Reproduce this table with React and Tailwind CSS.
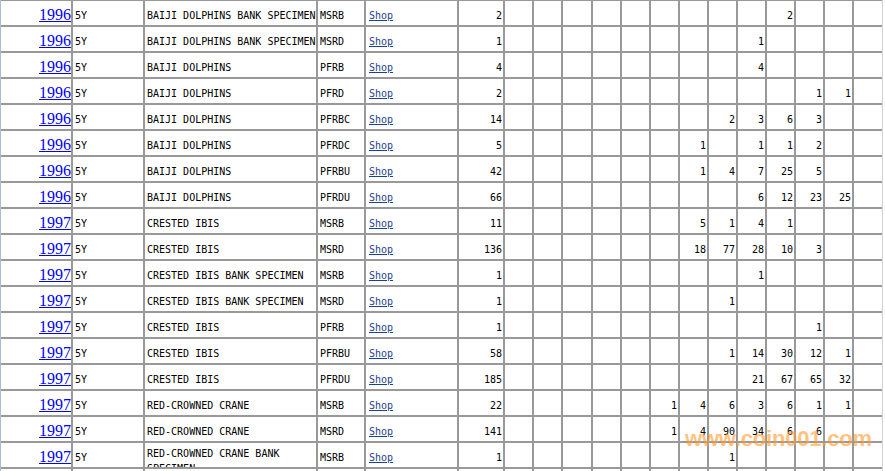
const COLS = "grid grid-cols-[70px_70px_171px_46px_91px_44px_27px_27px_28px_27px_27px_27px_27px_27px_27px_27px_27px_27px_28px] gap-x-[2px]";

const ROWS = [
  { year: "1996", name: "BAIJI DOLPHINS BANK SPECIMEN", code: "MSRB", total: 2, g: { 10: 2 } },
  { year: "1996", name: "BAIJI DOLPHINS BANK SPECIMEN", code: "MSRD", total: 1, g: { 9: 1 } },
  { year: "1996", name: "BAIJI DOLPHINS", code: "PFRB", total: 4, g: { 9: 4 } },
  { year: "1996", name: "BAIJI DOLPHINS", code: "PFRD", total: 2, g: { 11: 1, 12: 1 } },
  { year: "1996", name: "BAIJI DOLPHINS", code: "PFRBC", total: 14, g: { 8: 2, 9: 3, 10: 6, 11: 3 } },
  { year: "1996", name: "BAIJI DOLPHINS", code: "PFRDC", total: 5, g: { 7: 1, 9: 1, 10: 1, 11: 2 } },
  { year: "1996", name: "BAIJI DOLPHINS", code: "PFRBU", total: 42, g: { 7: 1, 8: 4, 9: 7, 10: 25, 11: 5 } },
  { year: "1996", name: "BAIJI DOLPHINS", code: "PFRDU", total: 66, g: { 9: 6, 10: 12, 11: 23, 12: 25 } },
  { year: "1997", name: "CRESTED IBIS", code: "MSRB", total: 11, g: { 7: 5, 8: 1, 9: 4, 10: 1 } },
  { year: "1997", name: "CRESTED IBIS", code: "MSRD", total: 136, g: { 7: 18, 8: 77, 9: 28, 10: 10, 11: 3 } },
  { year: "1997", name: "CRESTED IBIS BANK SPECIMEN", code: "MSRB", total: 1, g: { 9: 1 } },
  { year: "1997", name: "CRESTED IBIS BANK SPECIMEN", code: "MSRD", total: 1, g: { 8: 1 } },
  { year: "1997", name: "CRESTED IBIS", code: "PFRB", total: 1, g: { 11: 1 } },
  { year: "1997", name: "CRESTED IBIS", code: "PFRBU", total: 58, g: { 8: 1, 9: 14, 10: 30, 11: 12, 12: 1 } },
  { year: "1997", name: "CRESTED IBIS", code: "PFRDU", total: 185, g: { 9: 21, 10: 67, 11: 65, 12: 32 } },
  { year: "1997", name: "RED-CROWNED CRANE", code: "MSRB", total: 22, g: { 6: 1, 7: 4, 8: 6, 9: 3, 10: 6, 11: 1, 12: 1 } },
  { year: "1997", name: "RED-CROWNED CRANE", code: "MSRD", total: 141, g: { 6: 1, 7: 4, 8: 90, 9: 34, 10: 6, 11: 6 } },
  { year: "1997", name: "RED-CROWNED CRANE BANK SPECIMEN", code: "MSRB", total: 1, g: { 8: 1 } },
  { year: "1997", name: "RED-CROWNED CRANE BANK SPECIMEN", code: "MSRD", total: 1, g: { 9: 1 } },
];

const GRADES = [1, 2, 3, 4, 5, 6, 7, 8, 9, 10, 11, 12, 13];

const cell = "bg-white h-[24px] overflow-hidden";
const txt = "pt-[9px] leading-[11px]";

export default function App() {
  return (
    <div className="relative h-[471px] w-[885px] overflow-hidden bg-white flex font-['DejaVu_Sans_Mono',monospace] text-[10px] text-black">
      <div className="w-px bg-[#a9bcd9]" />

      <div className="w-[881px] flex flex-col gap-y-[2px] pt-px bg-[#999]">
        {ROWS.map((r, i) => {
          const wrap = r.name.length > 28;
          return (
            <div key={i} className={`${COLS} bg-[#999]`}>
              <div className={`${cell} text-right pt-[6px]`}>
                <a href="#" className="font-['Liberation_Serif',serif] text-[16px] leading-[16px] text-[#0000ff] underline">
                  {r.year}
                </a>
              </div>
              <div className={`${cell} ${txt} pl-[2px]`}>5Y</div>
              <div className={`${cell} pl-[2px] ${wrap ? "pt-[3px] leading-[15px]" : txt}`}>{r.name}</div>
              <div className={`${cell} ${txt} pl-[2px]`}>{r.code}</div>
              <div className={`${cell} ${txt} pl-[3px]`}>
                <a href="#" className="text-[#1d4191] underline">Shop</a>
              </div>
              <div className={`${cell} ${txt} text-right pr-[1px]`}>{r.total}</div>
              {GRADES.map((g) => (
                <div key={g} className={`${cell} ${txt} text-right pr-[1px]`}>
                  {r.g[g] || ""}
                </div>
              ))}
            </div>
          );
        })}
      </div>

      <div className="w-px bg-[#d4d4d4]" />

      {/* watermark */}
      <div className="absolute left-[685px] top-[426px] font-['Liberation_Sans',Arial,sans-serif] font-bold text-[22px] tracking-[-0.2px] leading-[26px] text-[#ff9a2e] opacity-60 pointer-events-none">
        www.coin001.com
      </div>
    </div>
  );
}
